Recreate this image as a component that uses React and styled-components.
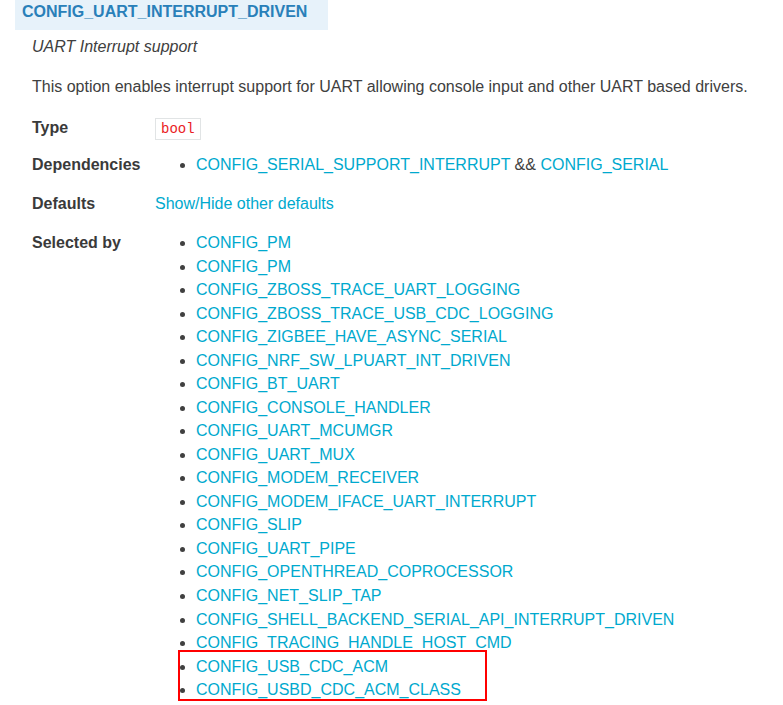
import React from 'react'
import styled, { createGlobalStyle } from 'styled-components'

const GlobalStyle = createGlobalStyle`
  body {
    margin: 0;
    background: #fff;
    color: #404040;
    font-family: "Liberation Sans", Arial, sans-serif;
    font-size: 16px;
  }
`

const Page = styled.div`
  padding-left: 15px;
  width: 768px;
`

const Signature = styled.div`
  display: inline-block;
  box-sizing: border-box;
  height: 30px;
  padding: 0 21px 0 7px;
  line-height: 24px;
  background: #e7f2fa;
  color: #2980b9;
  font-weight: bold;
  font-size: 16px;
`

const Content = styled.div`
  padding-left: 17px;
`

const Prompt = styled.p`
  margin: 5px 0 0;
  line-height: 24px;
  font-style: italic;
`

const Help = styled.p`
  margin: 16px 0 0;
  line-height: 24px;
`

const Table = styled.div`
  margin-top: 17px;
  display: flex;
  flex-direction: column;
  gap: 15px;
`

const Row = styled.div`
  display: grid;
  grid-template-columns: 123px 1fr;
  align-items: ${p => (p.center ? 'center' : 'start')};
  height: ${p => (p.center ? '22px' : 'auto')};
  line-height: 24px;
`

const Label = styled.div`
  font-weight: bold;
  color: #3a3a3a;
`

const Code = styled.code`
  display: inline-block;
  box-sizing: border-box;
  height: 22px;
  padding: 0 5px;
  border: 1px solid #e1e4e5;
  background: #fff;
  color: #ea1c24;
  font-family: "Liberation Mono", "Courier New", monospace;
  font-size: 14px;
  line-height: 20px;
`

const Link = styled.a`
  color: #00a9ce;
  text-decoration: none;
`

const List = styled.ul`
  position: relative;
  margin: 0;
  padding-left: 41px;
  list-style: disc;
  li {
    line-height: 23.53px;
  }
`

const Highlight = styled.div`
  position: absolute;
  left: 23px;
  top: 419px;
  width: 309px;
  height: 51px;
  box-sizing: border-box;
  border: 2px solid #f00;
  pointer-events: none;
`

const selectedBy = [
  'CONFIG_PM',
  'CONFIG_PM',
  'CONFIG_ZBOSS_TRACE_UART_LOGGING',
  'CONFIG_ZBOSS_TRACE_USB_CDC_LOGGING',
  'CONFIG_ZIGBEE_HAVE_ASYNC_SERIAL',
  'CONFIG_NRF_SW_LPUART_INT_DRIVEN',
  'CONFIG_BT_UART',
  'CONFIG_CONSOLE_HANDLER',
  'CONFIG_UART_MCUMGR',
  'CONFIG_UART_MUX',
  'CONFIG_MODEM_RECEIVER',
  'CONFIG_MODEM_IFACE_UART_INTERRUPT',
  'CONFIG_SLIP',
  'CONFIG_UART_PIPE',
  'CONFIG_OPENTHREAD_COPROCESSOR',
  'CONFIG_NET_SLIP_TAP',
  'CONFIG_SHELL_BACKEND_SERIAL_API_INTERRUPT_DRIVEN',
  'CONFIG_TRACING_HANDLE_HOST_CMD',
  'CONFIG_USB_CDC_ACM',
  'CONFIG_USBD_CDC_ACM_CLASS',
]

export default function App() {
  return (
    <Page>
      <GlobalStyle />
      <Signature>CONFIG_UART_INTERRUPT_DRIVEN</Signature>
      <Content>
        <Prompt>UART Interrupt support</Prompt>
        <Help>
          This option enables interrupt support for UART allowing console input
          and other UART based drivers.
        </Help>
        <Table>
          <Row center>
            <Label>Type</Label>
            <div>
              <Code>bool</Code>
            </div>
          </Row>
          <Row>
            <Label>Dependencies</Label>
            <List>
              <li>
                <Link href="#">CONFIG_SERIAL_SUPPORT_INTERRUPT</Link> &amp;&amp;{' '}
                <Link href="#">CONFIG_SERIAL</Link>
              </li>
            </List>
          </Row>
          <Row>
            <Label>Defaults</Label>
            <div>
              <Link href="#">Show/Hide other defaults</Link>
            </div>
          </Row>
          <Row>
            <Label>Selected by</Label>
            <List>
              {selectedBy.map((name, i) => (
                <li key={i}>
                  <Link href="#">{name}</Link>
                </li>
              ))}
              <Highlight />
            </List>
          </Row>
        </Table>
      </Content>
    </Page>
  )
}
